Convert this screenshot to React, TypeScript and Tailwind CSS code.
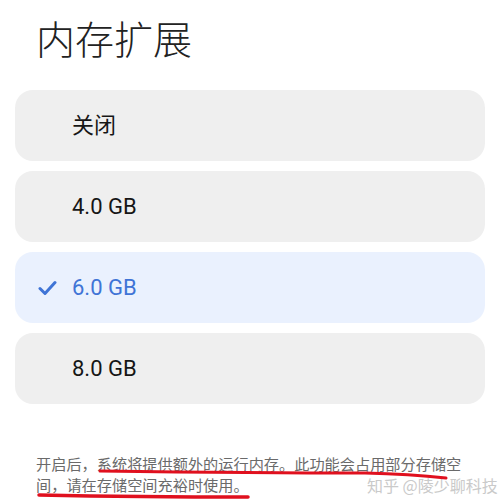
import React from 'react';

const options = [
  { label: '关闭', selected: false },
  { label: '4.0 GB', selected: false },
  { label: '6.0 GB', selected: true },
  { label: '8.0 GB', selected: false },
];

function Check() {
  return (
    <svg width="19" height="15" viewBox="0 0 19 15" className="absolute left-[-34px] top-1/2 -translate-y-1/2">
      <path d="M2 8 L7 13 L17 2" fill="none" stroke="#3f74d6" strokeWidth="3" strokeLinecap="round" strokeLinejoin="round" />
    </svg>
  );
}

export default function App() {
  return (
    <div className="relative w-[500px] h-[500px] overflow-hidden bg-white font-['Roboto','Noto_Sans_CJK_SC',sans-serif]">
      <h1 className="pl-[36px] pt-[12px] h-[90px] text-[39px] leading-[50px] font-light text-[#222] font-['Noto_Sans_CJK_SC',sans-serif]">
        内存扩展
      </h1>

      <div className="flex flex-col gap-[10px] px-[15px]">
        {options.map(o => (
          <div
            key={o.label}
            className={`h-[71px] rounded-[18px] flex items-center pl-[57px] ${o.selected ? 'bg-[#eaf1fe]' : 'bg-[#efefef]'}`}
          >
            <span
              className={`relative text-[22px] ${o.selected ? 'text-[#3f74d6]' : 'text-[#161616]'}`}
            >
              {o.selected && <Check />}
              {o.label}
            </span>
          </div>
        ))}
      </div>

      <p className="mt-[49px] ml-[36px] w-[430px] text-[15.2px] leading-[21px] text-[#6a6a6a] font-['Noto_Sans_CJK_SC',sans-serif]">
        开启后，系统将提供额外的运行内存。此功能会占用部分存储空间，请在存储空间充裕时使用。
      </p>

      <div className="absolute left-[367px] top-[475px] text-[16px] leading-[20px] text-[#cacaca] font-['Noto_Sans_CJK_SC',sans-serif] whitespace-nowrap">
        知乎 @陵少聊科技
      </div>

      <svg className="absolute left-0 top-0" width="500" height="500" viewBox="0 0 500 500">
        <path d="M100 471 Q 260 473 365 473 Q 410 474 446 478" fill="none" stroke="#e0101e" strokeWidth="3" strokeLinecap="round" />
        <path d="M39 495 Q 140 497 248 497" fill="none" stroke="#e0101e" strokeWidth="3.5" strokeLinecap="round" />
      </svg>
    </div>
  );
}
